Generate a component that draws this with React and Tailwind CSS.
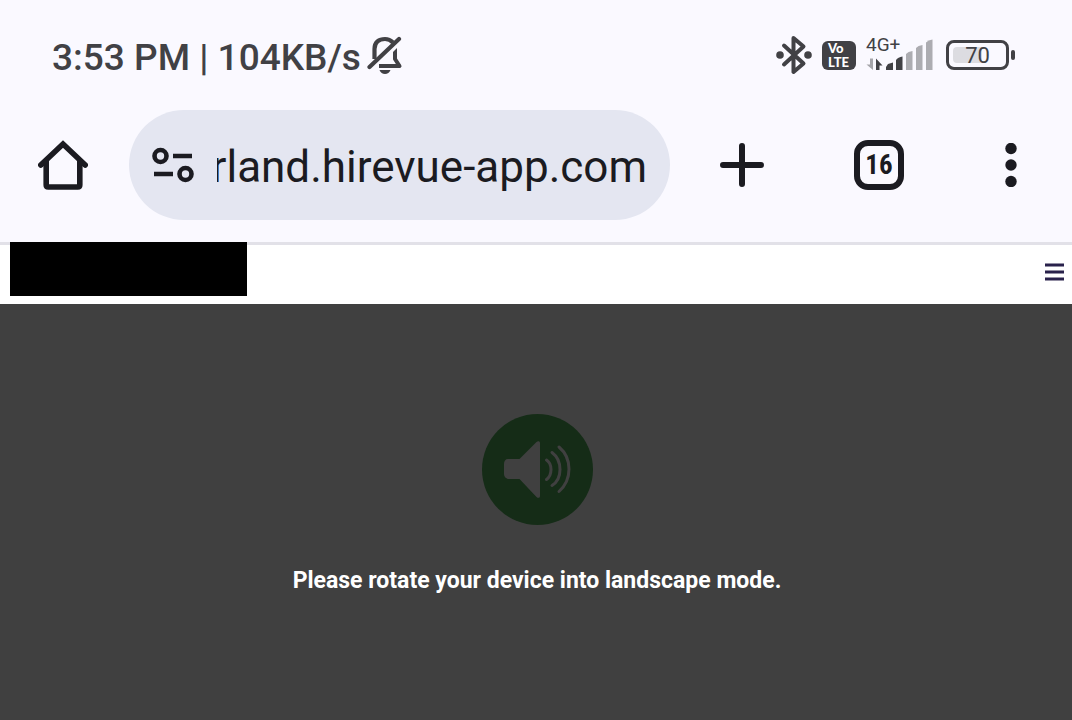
import React from "react";

function MutedBellIcon() {
  return (
    <svg width="36" height="40" viewBox="0 0 36 40" fill="none" aria-hidden="true">
      <path d="M7.500 24V14C7.500 7 12 4 18 4C21.500 4 24 5.500 26 7.500" stroke="#414145" strokeWidth="4.200" />
      <path d="M2.500 32L32 4" stroke="#414145" strokeWidth="4.200" strokeLinecap="round" />
      <path d="M28 18V24L32.500 31H12" stroke="#414145" strokeWidth="4" strokeLinejoin="round" />
      <path d="M30 13L26 17V24H30Z" fill="#414145" />
      <path d="M12.500 35H23.500C22.500 37.500 20.500 39 18 39S13.500 37.500 12.500 35Z" fill="#414145" />
    </svg>
  );
}

function BluetoothIcon() {
  return (
    <svg width="36" height="40" viewBox="0 0 36 40" fill="none" aria-hidden="true">
      <path
        d="M8 10.500L27.500 28.500L17.500 37V3L27.500 11.500L8 29.500"
        stroke="#414145"
        strokeWidth="4"
        strokeLinejoin="round"
        strokeLinecap="round"
      />
      <circle cx="4" cy="20" r="3.800" fill="#414145" />
      <circle cx="32" cy="20" r="3.800" fill="#414145" />
    </svg>
  );
}

function SignalIcon() {
  return (
    <svg width="68" height="32" viewBox="0 0 68 32" aria-hidden="true">
      <path d="M4 19.500H7V31L0.500 25.500H4Z" fill="#a5a5aa" />
      <path d="M10 19.500L16.500 26.500H13.500V31H10Z" fill="#414145" />
      <path d="M20 31V28L22 25L27 23.500V31Z" fill="#414145" />
      <path d="M30 31V21Q32 18 36.500 17.500V31Z" fill="#414145" />
      <path d="M40 31V15Q42 12.500 46.500 12V31Z" fill="#acacb1" />
      <path d="M50 31V9Q52 6.500 56.500 6V31Z" fill="#acacb1" />
      <path d="M60 31V3.500Q62 1 66.500 0.500V31Z" fill="#acacb1" />
    </svg>
  );
}

function HomeIcon() {
  return (
    <svg width="50" height="50" viewBox="0 0 50 50" fill="none" stroke="#1b1b21" strokeWidth="5.600" aria-hidden="true">
      <path d="M2.800 25L25 4L47.200 25" strokeLinecap="round" strokeLinejoin="miter" />
      <path d="M8.200 21V45Q8.200 47 10.200 47H39.800Q41.800 47 41.800 45V21" />
    </svg>
  );
}

function SiteSettingsIcon() {
  return (
    <svg width="42" height="36" viewBox="0 0 42 36" fill="none" stroke="#1b1b21" strokeWidth="4.600" aria-hidden="true">
      <circle cx="8.500" cy="9" r="6" />
      <path d="M21 9H40M2 27H21" />
      <circle cx="33.500" cy="27" r="6" />
    </svg>
  );
}

function SpeakerIcon() {
  return (
    <svg width="111" height="111" viewBox="0 0 111 111" fill="none" aria-hidden="true">
      <circle cx="55.500" cy="55.500" r="55.500" fill="#152c17" />
      <path
        d="M26 45H37.500L54.500 28C56 26.500 58 27 58 29V82C58 84 56 84.500 54.500 83L37.500 65H27C24 65 22 62.500 22 60V50C22 47 23.500 45 26 45Z"
        fill="#404040"
      />
      <g stroke="#404040" strokeWidth="3" strokeLinecap="round">
        <path d="M64.500 46Q69 49 69 55.500T64.500 65.500" />
        <path d="M70 38.500Q78 44.500 78 55.500T70 71.500" />
        <path d="M77 33Q87 41.500 87 55T77 77.500" />
      </g>
    </svg>
  );
}

function StatusBar() {
  return (
    <div className="flex h-[110px] items-center justify-between pr-[57px] pl-13 text-[#414145]">
      <div className="flex items-center gap-1.5">
        <span className="pt-1.5 text-[37px] leading-[44px] font-medium">3:53 PM | 104KB/s</span>
        <MutedBellIcon />
      </div>
      <div className="flex items-center gap-2.5">
        <BluetoothIcon />
        <div className="flex h-[29px] w-[34px] flex-col justify-center rounded-md bg-[#414145] pl-1.5 font-['Lato',sans-serif] text-[13px] leading-[14px] font-black text-white">
          <span>Vo</span>
          <span>LTE</span>
        </div>
        <div className="relative">
          <span className="absolute -top-1.5 left-0 text-[19px] leading-6">4G+</span>
          <SignalIcon />
        </div>
        <div className="ml-0.5 flex items-center gap-0.5">
          <div className="h-[30px] w-[63px] rounded-lg border-3 border-[#414145] p-1">
            <div className="flex h-full items-center justify-center rounded-sm bg-linear-to-r from-[#dcdce1] from-60% to-transparent to-60% pt-0.5 text-[22px] leading-6">
              70
            </div>
          </div>
          <div className="h-2.5 w-1 rounded-sm bg-[#414145]" />
        </div>
      </div>
    </div>
  );
}

function BrowserBar() {
  return (
    <div className="flex h-[132px] items-start pr-[55px] pl-[38px] text-[#1b1b21]">
      <button type="button" aria-label="Home" className="mr-[41px] flex h-[110px] items-center">
        <HomeIcon />
      </button>
      <div className="flex h-[110px] min-w-0 flex-1 items-center rounded-full bg-[#e4e6f1] px-[23px]">
        <button type="button" aria-label="Site settings" className="mr-[23px] shrink-0">
          <SiteSettingsIcon />
        </button>
        <input
          type="text"
          dir="rtl"
          aria-label="Address"
          defaultValue="rland.hirevue-app.com"
          className="h-16 w-full min-w-0 bg-transparent pt-1 text-[44px] outline-none"
        />
      </div>
      <button type="button" aria-label="New tab" className="ml-[50px] flex h-[110px] items-center">
        <svg width="44" height="44" viewBox="0 0 44 44" stroke="#1b1b21" strokeWidth="6" strokeLinecap="round">
          <path d="M22 3V41M3 22H41" />
        </svg>
      </button>
      <button type="button" aria-label="Tabs" className="ml-[90px] flex h-[110px] items-center">
        <span className="flex size-[50px] items-center justify-center rounded-[14px] border-6 border-[#1b1b21] font-['Roboto_Condensed','Roboto',sans-serif] text-[27px] leading-8 font-bold">
          16
        </span>
      </button>
      <button type="button" aria-label="Menu" className="ml-[101px] flex h-[110px] items-center">
        <svg width="12" height="44" viewBox="0 0 12 44" fill="#1b1b21">
          <circle cx="6" cy="5.500" r="5.700" />
          <circle cx="6" cy="22" r="5.700" />
          <circle cx="6" cy="38.500" r="5.700" />
        </svg>
      </button>
    </div>
  );
}

export default function App() {
  return (
    <div className="flex min-h-screen flex-col bg-[#faf9ff] font-['Roboto',sans-serif]">
      <StatusBar />
      <BrowserBar />
      <header className="flex h-[62px] items-start justify-between bg-white pr-2 pl-2.5 shadow-[inset_0_3px_0_#e2e1e8]">
        <div className="h-[54px] w-[237px] bg-black" />
        <button type="button" aria-label="Open navigation" className="flex h-[60px] items-center">
          <svg width="20" height="18" viewBox="0 0 20 18" stroke="#29214b" strokeWidth="3">
            <path d="M1 2H20M1 9H20M1 16H20" />
          </svg>
        </button>
      </header>
      <main className="flex flex-1 flex-col items-center bg-[#404040] pt-[110px] pl-0.5">
        <SpeakerIcon />
        <p className="mt-10 text-[23px] leading-8 font-bold text-white">
          Please rotate your device into landscape mode.
        </p>
      </main>
    </div>
  );
}
